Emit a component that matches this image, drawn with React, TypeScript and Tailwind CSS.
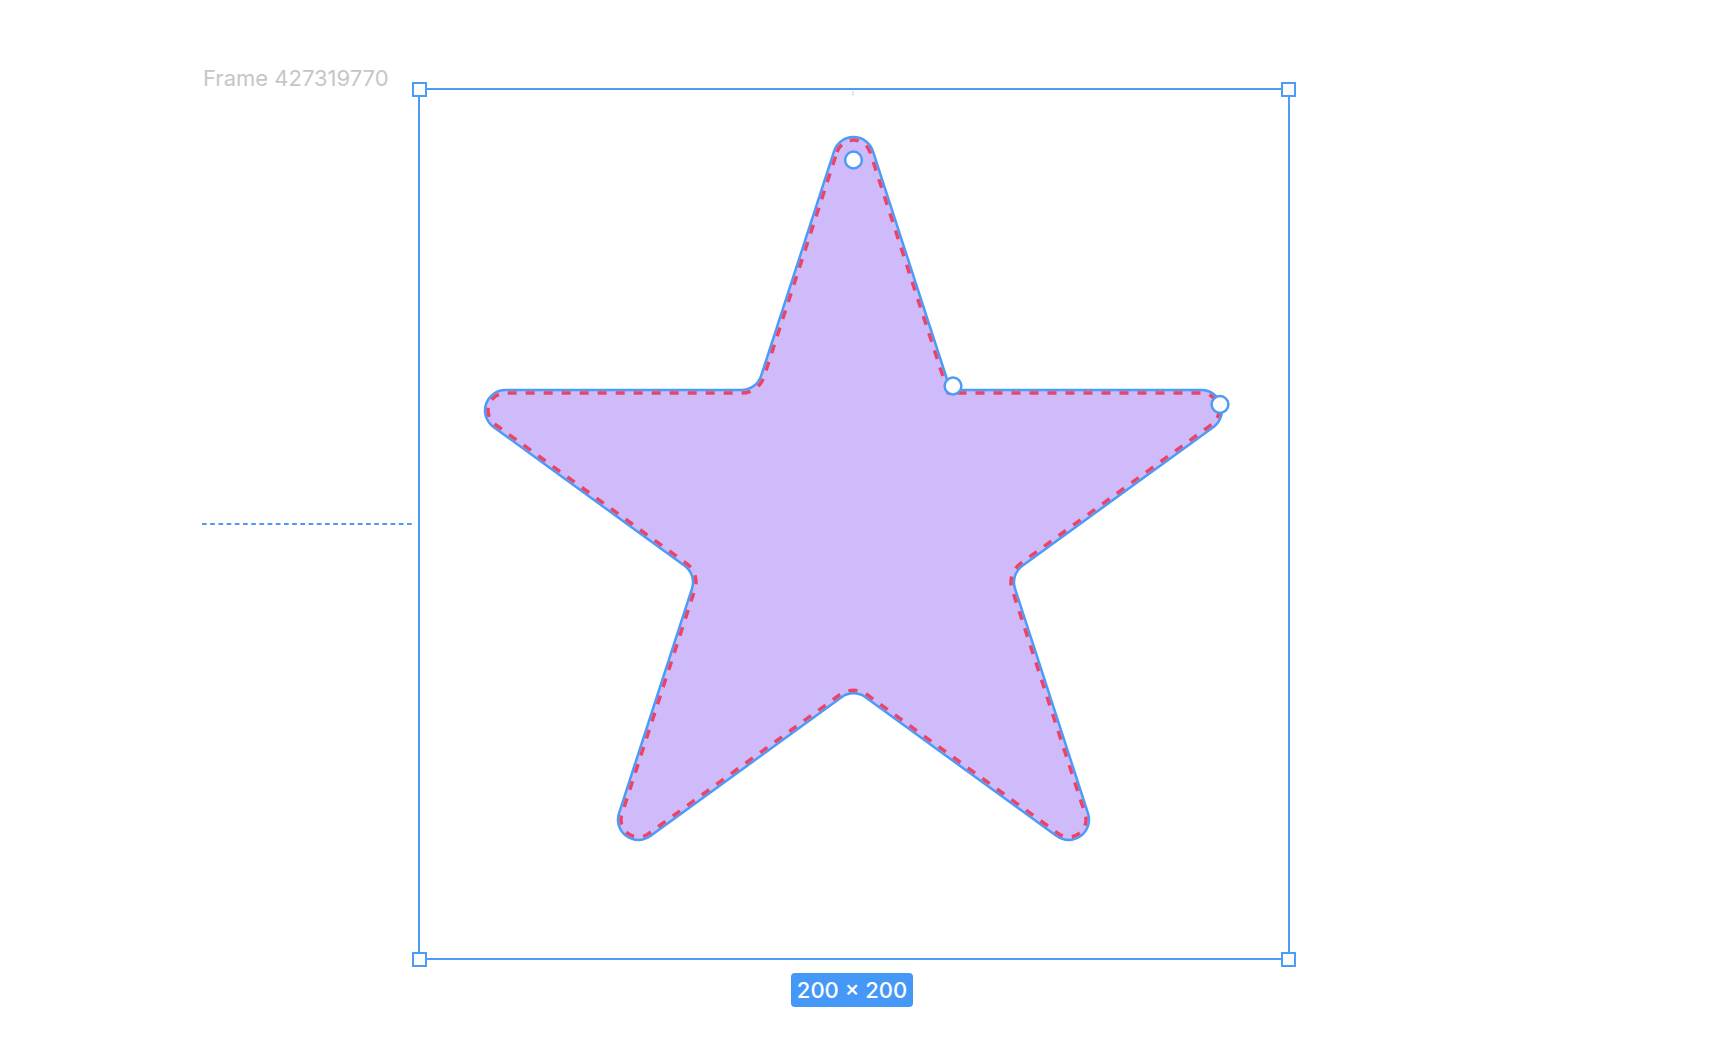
import React from 'react';

// 캔버스 좌표 (px)
const CX = 853.5;
const CY = 523.5;
const R_OUT = 432;
const R_IN = R_OUT * 0.381966;
const CORNER = 20.4;

type Pt = [number, number];

// 둥근 모서리 별 path
function starPath(cx: number, cy: number, R: number, r: number, radii: number[]) {
  const pts: Pt[] = Array.from({ length: 10 }, (_, i) => {
    const a = ((-90 + i * 36) * Math.PI) / 180;
    const d = i % 2 === 0 ? R : r;
    return [cx + d * Math.cos(a), cy + d * Math.sin(a)];
  });
  let d = '';
  pts.forEach((p, i) => {
    const a = pts[(i + 9) % 10];
    const b = pts[(i + 1) % 10];
    const rr = radii[i];
    const v1: Pt = [a[0] - p[0], a[1] - p[1]];
    const v2: Pt = [b[0] - p[0], b[1] - p[1]];
    const l1 = Math.hypot(v1[0], v1[1]);
    const l2 = Math.hypot(v2[0], v2[1]);
    const u1: Pt = [v1[0] / l1, v1[1] / l1];
    const u2: Pt = [v2[0] / l2, v2[1] / l2];
    const ang = Math.acos(u1[0] * u2[0] + u1[1] * u2[1]);
    const t = rr > 0 ? rr / Math.tan(ang / 2) : 0;
    const p1: Pt = [p[0] + u1[0] * t, p[1] + u1[1] * t];
    const p2: Pt = [p[0] + u2[0] * t, p[1] + u2[1] * t];
    const sweep = i % 2 === 0 ? 1 : 0;
    d += `${i === 0 ? 'M' : 'L'}${p1[0].toFixed(2)} ${p1[1].toFixed(2)} `;
    if (rr > 0) d += `A${rr} ${rr} 0 0 ${sweep} ${p2[0].toFixed(2)} ${p2[1].toFixed(2)} `;
  });
  return d + 'Z';
}

const radii = (tip: number, inner: number) =>
  Array.from({ length: 10 }, (_, i) => (i === 1 ? 0 : i % 2 === 0 ? tip : inner));

const INSET = 3;
const scale = (R_OUT * Math.sin(Math.PI / 10) - INSET) / (R_OUT * Math.sin(Math.PI / 10));

const outline = starPath(CX, CY, R_OUT, R_IN, radii(CORNER, CORNER));
const dashed = starPath(CX, CY, R_OUT * scale, R_IN * scale, radii(CORNER - INSET, CORNER + INSET));

const handles: Pt[] = [
  [853.5, 160],
  [953, 386],
  [1220, 404.5],
];

function CornerHandle({ className }: { className: string }) {
  return (
    <div
      className={`absolute w-[15px] h-[15px] bg-[#fcfcfc] border-[2.5px] border-[#4b9bf7] ${className}`}
    />
  );
}

export default function App() {
  return (
    <div className="relative w-[1718px] h-[1048px] bg-white overflow-hidden font-['Inter','Noto_Sans',sans-serif]">
      {/* 프레임 이름 */}
      <div className="absolute left-[203px] top-[67px] text-[22px] leading-[22px] text-[#c6c6c6] whitespace-nowrap">
        Frame 427319770
      </div>

      {/* 가로 가이드 */}
      <svg className="absolute left-[200px] top-[520px]" width="216" height="8" viewBox="200 520 216 8">
        <line x1="202" y1="524" x2="414" y2="524" stroke="#4d99f6" strokeWidth="2" strokeDasharray="4.7 3.5" />
      </svg>

      {/* 프레임 테두리 */}
      <div className="absolute left-[418.25px] top-[87.75px] w-[871.5px] h-[872.5px] border-[2.5px] border-[#4b9bf7]" />

      {/* 별 */}
      <svg className="absolute left-[412px] top-[81px]" width="884" height="886" viewBox="412 81 884 886">
        <rect x="852.5" y="91.5" width="1" height="1.2" fill="#6aa6f2" />
        <rect x="852.5" y="94" width="1" height="1.2" fill="#6aa6f2" />
        <path d={outline} fill="#cfbbfa" stroke="#4b9bf7" strokeWidth="2.5" strokeLinejoin="round" />
        <path d={dashed} fill="none" stroke="#ea4468" strokeWidth="3.5" strokeDasharray="9 9" />
        {handles.map(([x, y], i) => (
          <circle key={i} cx={x} cy={y} r="8.4" fill="#fdfdfd" stroke="#4b9bf7" strokeWidth="2.5" />
        ))}
      </svg>

      {/* 모서리 핸들 */}
      <CornerHandle className="left-[412px] top-[81.5px]" />
      <CornerHandle className="left-[1281px] top-[81.5px]" />
      <CornerHandle className="left-[412px] top-[951.5px]" />
      <CornerHandle className="left-[1281px] top-[951.5px]" />

      {/* 크기 배지 */}
      <div className="absolute left-[791px] top-[973px] w-[122px] h-[34px] rounded-[4px] bg-[#4598f7] flex items-center justify-center text-white text-[22px] font-medium leading-none">
        200 × 200
      </div>
    </div>
  );
}
